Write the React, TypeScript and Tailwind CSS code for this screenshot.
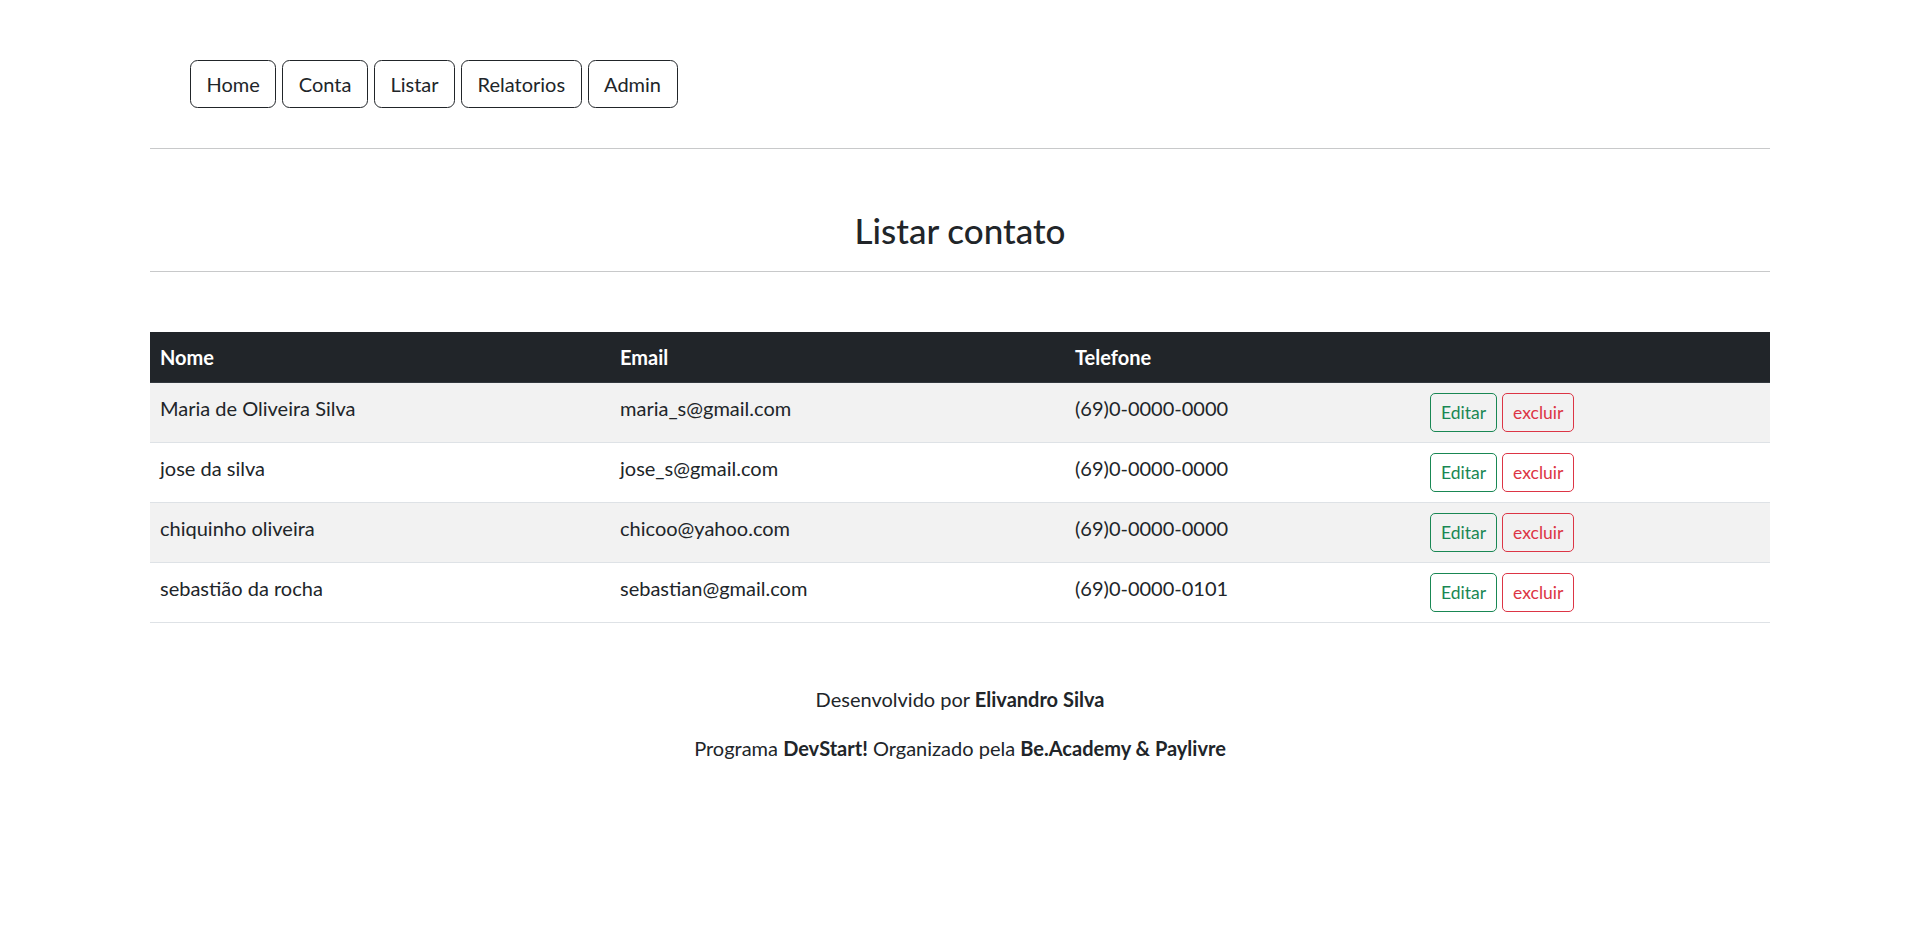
import React from "react";

const rows = [
  { nome: "Maria de Oliveira Silva", email: "maria_s@gmail.com", tel: "(69)0-0000-0000" },
  { nome: "jose da silva", email: "jose_s@gmail.com", tel: "(69)0-0000-0000" },
  { nome: "chiquinho oliveira", email: "chicoo@yahoo.com", tel: "(69)0-0000-0000" },
  { nome: "sebastião da rocha", email: "sebastian@gmail.com", tel: "(69)0-0000-0101" },
];

const navItems = ["Home", "Conta", "Listar", "Relatorios", "Admin"];

export default function App() {
  return (
    <div
      className="min-h-[938px] w-full bg-white text-[#212529]"
      style={{ fontFamily: '"Segoe UI", Lato, "Liberation Sans", sans-serif' }}
    >
      <div className="mx-auto w-[1650px] px-[15px]">
        <nav className="pt-[60px] pl-[40px]">
          <ul className="flex gap-[6px]">
            {navItems.map((n) => (
              <li key={n}>
                <button className="h-[48px] rounded-[7.5px] border border-[#212529] bg-white px-[15.5px] text-[20px] leading-[30px] text-[#212529]">
                  {n}
                </button>
              </li>
            ))}
          </ul>
        </nav>
        <div className="mt-[40px] h-px bg-[#c8c9ca]" />
        <h3 className="mt-[60px] text-center text-[35px] font-medium leading-[42px]">Listar contato</h3>
        <div className="mt-[20px] h-px bg-[#c8c9ca]" />
        <table className="mt-[60px] w-full table-fixed border-collapse text-[20px] leading-[30px]">
          <colgroup>
            <col className="w-[460px]" />
            <col className="w-[455px]" />
            <col className="w-[355px]" />
            <col />
          </colgroup>
          <thead>
            <tr className="bg-[#212529] text-white">
              <th className="border-b border-[#32383e] p-[10px] text-left font-bold">Nome</th>
              <th className="border-b border-[#32383e] p-[10px] text-left font-bold">Email</th>
              <th className="border-b border-[#32383e] p-[10px] text-left font-bold">Telefone</th>
              <th className="border-b border-[#32383e] p-[10px] text-left font-bold"></th>
            </tr>
          </thead>
          <tbody>
            {rows.map((r, i) => (
              <tr key={i} className={i % 2 === 0 ? "bg-[#f2f2f2]" : "bg-white"}>
                <td className="border-b border-[#dee2e6] p-[10px] align-top">{r.nome}</td>
                <td className="border-b border-[#dee2e6] p-[10px] align-top">{r.email}</td>
                <td className="border-b border-[#dee2e6] p-[10px] align-top">{r.tel}</td>
                <td className="border-b border-[#dee2e6] p-[10px] align-top">
                  <div className="flex gap-[5px]">
                    <button className="h-[39px] rounded-[5px] border border-[#198754] px-[10px] text-[17.5px] leading-[26px] text-[#198754]">
                      Editar
                    </button>
                    <button className="h-[39px] rounded-[5px] border border-[#dc3545] px-[10px] text-[17.5px] leading-[26px] text-[#dc3545]">
                      excluir
                    </button>
                  </div>
                </td>
              </tr>
            ))}
          </tbody>
        </table>
        <footer className="mt-[61px] text-center text-[20px] leading-[30px]">
          <p>
            Desenvolvido por <b className="font-bold">Elivandro Silva</b>
          </p>
          <p className="mt-[19px]">
            Programa <b className="font-bold">DevStart!</b> Organizado pela{" "}
            <b className="font-bold">Be.Academy &amp; Paylivre</b>
          </p>
        </footer>
      </div>
    </div>
  );
}
